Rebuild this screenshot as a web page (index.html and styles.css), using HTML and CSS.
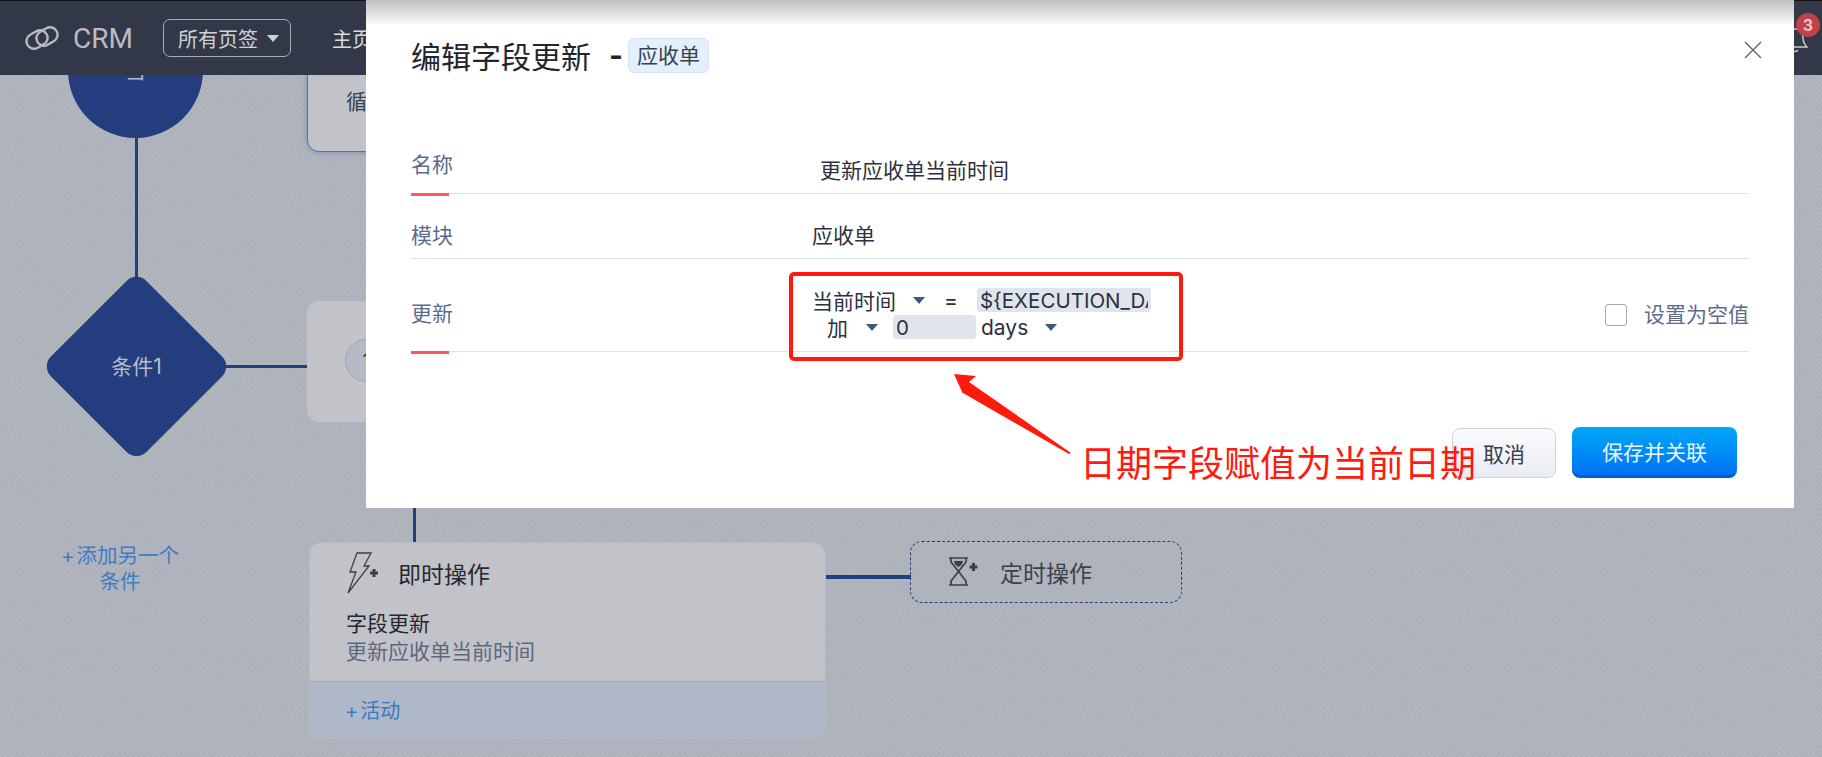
FILE: index.html
```html
<!DOCTYPE html>
<html lang="zh-CN">
  <head>
    <meta charset="UTF-8" />
    <title>CRM</title>
    <link rel="stylesheet" href="styles.css">
  </head>
  <body>
    <header class="topbar">
      <svg class="logo" viewBox="0 0 36 24" width="36" height="24" fill="none" stroke="#b6b9bf" stroke-width="2.4">
        <rect x="2" y="6" width="22" height="15" rx="7.500" transform="rotate(-30 13 13.500)" />
        <rect x="12" y="3" width="22" height="15" rx="7.500" transform="rotate(-30 23 10.500)" />
      </svg>
      <span class="brand">CRM</span>
      <button class="tabs-btn">所有页签<i class="caret caret-light"></i></button>
      <nav class="nav"><a>主页</a></nav>
      <svg class="bell" viewBox="0 0 30 30" width="30" height="30" fill="none" stroke="#c9ccd2" stroke-width="1.4">
        <path d="M15 4 C9 4 7 8 7 13 C7 18 5 20 3 22 L27 22 C25 20 23 18 23 13 C23 8 21 4 15 4 Z" />
        <path d="M12 25 C13 27 17 27 18 25" />
      </svg>
      <span class="badge">3</span>
    </header>

    <!-- workflow diagram behind the dialog -->
    <main class="canvas">
      <div class="line line-v line-start"></div>
      <div class="line line-h line-cond"></div>
      <div class="line line-v line-card"></div>
      <div class="line line-h line-timed"></div>

      <div class="node-start"><span>当</span></div>
      <div class="node-cond"><span>条件1</span></div>
      <a class="add-cond"><b>+</b>添加另一个<br />条件</a>

      <div class="card card-top"><span>循环</span></div>
      <div class="card card-branch"><span class="step-no">1</span></div>

      <div class="card card-action">
        <div class="action-head">
          <svg viewBox="0 0 32 44" width="32" height="44" fill="none" stroke="#3c3f48" stroke-width="1.3">
            <path d="M10 2 L24 2 L17 15 L22 15 L1 42 L9 21 L3 21 Z" />
            <path d="M23 22 H31 M27 18 V26" stroke-width="3" />
          </svg>
          <span>即时操作</span>
        </div>
        <div class="action-body">
          <div class="action-type">字段更新</div>
          <div class="action-name">更新应收单当前时间</div>
        </div>
        <div class="action-foot"><b>+</b>活动</div>
      </div>

      <div class="card-timed">
        <svg viewBox="0 0 30 30" width="30" height="30" fill="none" stroke="#3c3f48" stroke-width="1.7">
          <path d="M1 1 H20 M1 28 H20 M3 1 V5 L10.500 14.500 L3 24 V28 M18 1 V5 L10.500 14.500 L18 24 V28" />
          <path d="M6 4 H15 C14.500 8 12 9 10.500 10 C9 9 6.500 8 6 4 Z" fill="#3c3f48" stroke="none" />
          <path d="M21.500 10 H29.500 M25.500 6 V14" stroke-width="3" />
        </svg>
        <span>定时操作</span>
      </div>
    </main>

    <section class="modal">
      <button class="close" aria-label="关闭">
        <svg viewBox="0 0 18 18" width="18" height="18" stroke="#5c5f66" stroke-width="1.3"><path d="M1 1 L17 17 M17 1 L1 17" /></svg>
      </button>
      <div class="modal-title">
        <h2>编辑字段更新</h2>
        <span class="dash">-</span>
        <span class="chip">应收单</span>
      </div>

      <div class="row row-name">
        <label class="row-label marked">名称</label>
        <div class="row-value value-name">更新应收单当前时间</div>
      </div>
      <div class="row row-module">
        <label class="row-label">模块</label>
        <div class="row-value">应收单</div>
      </div>
      <div class="row row-update">
        <label class="row-label marked">更新</label>
        <div class="row-value update-fields">
          <div class="field-line">
            <span class="pick pick-field">当前时间<i class="caret"></i></span>
            <span class="equals">=</span>
            <input class="text-input input-date" type="text" value="${EXECUTION_DATE}" />
          </div>
          <div class="field-line line-second">
            <span class="pick pick-op">加<i class="caret"></i></span>
            <input class="text-input input-num" type="text" value="0" />
            <span class="pick pick-unit">days<i class="caret"></i></span>
          </div>
        </div>
        <label class="set-empty"><input type="checkbox" />设置为空值</label>
      </div>

      <div class="modal-foot">
        <button class="btn btn-cancel">取消</button>
        <button class="btn btn-save">保存并关联</button>
      </div>
    </section>

    <!-- red annotation drawn on top of the screenshot -->
    <div class="mark-box"></div>
    <svg class="mark-arrow" viewBox="0 0 130 90" width="130" height="90">
      <polygon points="2,2 24,4 17,10 119,81 117,82 11,21 11,22" fill="#ff1a0e" />
    </svg>
    <div class="mark-text">日期字段赋值为当前日期</div>
  </body>
</html>
```

FILE: styles.css
```css
* {
  box-sizing: border-box;
}

body {
  margin: 0;
  height: 757px;
  overflow: hidden;
  position: relative;
  font-family: Inter, "Noto Sans CJK SC", sans-serif;
  color: #2c3140;
  background-color: #b0b4bd;
  background-image:
    repeating-linear-gradient(45deg, rgba(255, 255, 255, 0.012) 0 2px, rgba(0, 0, 0, 0.012) 2px 4px),
    repeating-linear-gradient(-45deg, rgba(255, 255, 255, 0.012) 0 2px, rgba(0, 0, 0, 0.012) 2px 4px);
}

b {
  font-weight: 400;
  margin-right: 2px;
}

/* top bar */
.topbar {
  position: relative;
  height: 75px;
  display: flex;
  align-items: center;
  padding-left: 24px;
  background-color: #333848;
  border-top: 1px solid #111;
  color: #d8dade;
}

.logo {
  margin-right: 13px;
}

.brand {
  font-family: Roboto, sans-serif;
  font-size: 28px;
  color: #b9bcc3;
  margin-right: 30px;
}

.tabs-btn {
  display: flex;
  align-items: center;
  height: 38px;
  width: 128px;
  padding: 0 0 0 14px;
  background: transparent;
  border: 1px solid #a9abb2;
  border-radius: 7px;
  color: #d0d2d8;
  font-family: inherit;
  font-size: 20px;
  margin-right: 41px;
}

.nav {
  font-size: 20px;
}

.caret {
  display: inline-block;
  width: 0;
  height: 0;
  border-left: 6px solid transparent;
  border-right: 6px solid transparent;
  border-top: 7px solid #3f5a75;
}

.caret-light {
  margin-left: 9px;
  border-top-color: #d0d2d8;
}

.bell {
  position: absolute;
  left: 1780px;
  top: 24px;
}

.badge {
  position: absolute;
  left: 1796px;
  top: 12px;
  width: 24px;
  height: 24px;
  border-radius: 50%;
  background-color: #c0414a;
  color: #e3c9cc;
  font-size: 16px;
  font-weight: 700;
  line-height: 24px;
  text-align: center;
}

/* diagram */
.canvas {
  position: absolute;
  inset: 0;
  z-index: -1;
}

.line {
  position: absolute;
  background-color: #233d7f;
}

.line-v {
  width: 3px;
}

.line-h {
  height: 3px;
}

.line-start {
  left: 135px;
  top: 130px;
  height: 150px;
}

.line-cond {
  left: 220px;
  top: 365px;
  width: 90px;
}

.line-card {
  left: 413px;
  top: 500px;
  height: 45px;
}

.line-timed {
  left: 826px;
  top: 575px;
  width: 85px;
  height: 4px;
}

.node-start {
  position: absolute;
  left: 68px;
  top: 3px;
  width: 135px;
  height: 135px;
  border-radius: 50%;
  background-color: #233d7f;
  color: #b9bdc6;
  font-size: 20px;
  display: flex;
  align-items: center;
  justify-content: center;
}

.node-cond {
  position: absolute;
  left: 47px;
  top: 275px;
  width: 179px;
  height: 179px;
  display: flex;
  align-items: center;
  justify-content: center;
  color: #b9bdc6;
  font-size: 21px;
}

.node-cond::before {
  content: "";
  position: absolute;
  inset: 22px;
  top: 24px;
  bottom: 20px;
  border-radius: 14px;
  background-color: #233d7f;
  transform: rotate(45deg);
}

.node-cond span {
  position: relative;
}

.add-cond {
  position: absolute;
  left: 40px;
  top: 543px;
  width: 160px;
  text-align: center;
  font-size: 20.500px;
  line-height: 26px;
  color: #3d7cc9;
}

.card {
  position: absolute;
  left: 307px;
  width: 519px;
  background-color: #c1c3c9;
  border-radius: 12px;
}

.card-top {
  top: 40px;
  height: 112px;
  padding: 44px 0 0 38px;
  border: 1px solid #3a78c8;
  box-shadow: 0 0 5px rgba(58, 120, 200, 0.6);
  font-size: 21px;
  color: #3a4050;
}

.card-branch {
  top: 301px;
  height: 121px;
  padding: 38px 0 0 38px;
}

.step-no {
  display: flex;
  align-items: center;
  justify-content: center;
  width: 43px;
  height: 43px;
  border-radius: 50%;
  background-color: #b6bac6;
  border: 1px solid #9ea4b2;
  font-size: 20px;
}

.card-action {
  left: 309px;
  width: 517px;
  top: 542px;
  height: 197px;
  display: flex;
  flex-direction: column;
  overflow: hidden;
  border: 1px solid #b4b9c5;
}

.action-head {
  display: flex;
  align-items: center;
  gap: 19px;
  height: 60px;
  padding: 0 0 0 37px;
  font-size: 23px;
  color: #262932;
}

.action-body {
  flex: 1;
  padding: 7px 0 0 36px;
  font-size: 21px;
  line-height: 28px;
}

.action-type {
  color: #24272f;
}

.action-name {
  color: #5d6880;
}

.action-foot {
  height: 57px;
  padding-left: 35px;
  background-color: #aeb8c8;
  border-top: 1px solid #a3aec0;
  font-size: 20px;
  line-height: 58px;
  color: #3a78c4;
}

.card-timed {
  position: absolute;
  left: 910px;
  top: 541px;
  width: 272px;
  height: 62px;
  display: flex;
  align-items: center;
  gap: 22px;
  padding-left: 37px;
  border: 1px dashed #233d7f;
  border-radius: 12px;
  font-size: 23px;
  color: #3a4050;
}

/* dialog */
.modal {
  position: absolute;
  left: 366px;
  top: 0;
  width: 1428px;
  height: 508px;
  padding: 35px 45px 0;
  background: linear-gradient(#c2c2c2 1px, #fafafa 24px, #fff 24px);
}

.close {
  position: absolute;
  right: 32px;
  top: 41px;
  padding: 0;
  border: none;
  background: none;
}

.modal-title {
  display: flex;
  align-items: center;
  height: 40px;
  margin-bottom: 75px;
}

.modal-title h2 {
  margin: 0;
  font-size: 30px;
  font-weight: 400;
  color: #22252c;
}

.dash {
  margin: 0 5px 0 18px;
  font-size: 30px;
  font-weight: 700;
  color: #22252c;
}

.chip {
  padding: 0 8px;
  height: 35px;
  line-height: 33px;
  font-size: 21px;
  color: #3a4050;
  background-color: #e3effc;
  border: 1px solid #d5e4f7;
  border-radius: 6px;
}

.row {
  position: relative;
  display: flex;
  border-bottom: 1px solid #dde3ec;
  font-size: 21px;
}

.row-label {
  position: relative;
  width: 401px;
  font-size: 21px;
  color: #5d6b8a;
}

.marked::after {
  content: "";
  position: absolute;
  left: 0;
  width: 38px;
  height: 3px;
  background-color: #fb5a5c;
}

.row-name {
  height: 44px;
}

.row-name .row-label {
  line-height: 30px;
}

.row-name .marked::after {
  top: 43px;
}

.value-name {
  padding: 7px 0 0 8px;
  line-height: 28px;
}

.row-module {
  height: 65px;
  align-items: center;
  padding-top: 16px;
}

.row-update {
  height: 93px;
}

.row-update .row-label {
  padding-top: 41px;
  line-height: 28px;
}

.row-update .marked::after {
  top: 92px;
}

.update-fields {
  padding-top: 28px;
}

.field-line {
  display: flex;
  align-items: center;
  height: 26px;
}

.line-second {
  padding: 2px 0 0 15px;
}

.pick {
  display: flex;
  align-items: center;
  white-space: nowrap;
}

.pick .caret {
  margin-left: 17px;
}

.pick-op .caret {
  margin-left: 18px;
}

.equals {
  margin: 0 19px;
}

.text-input {
  height: 24px;
  padding: 0 3px;
  border: none;
  border-radius: 3px;
  background-color: #e0e5ec;
  font-family: inherit;
  font-size: 20.500px;
  color: #2c3140;
}

.input-date {
  width: 174px;
}

.input-num {
  width: 83px;
  margin: 0 5px 0 15px;
}

.set-empty {
  position: absolute;
  right: 0;
  top: 39px;
  display: flex;
  align-items: center;
  gap: 17px;
  font-size: 21px;
  color: #5d6b8a;
}

.set-empty input {
  appearance: none;
  position: relative;
  top: 2px;
  width: 22px;
  height: 22px;
  margin: 0;
  background: #fff;
  border: 1px solid #a9a9a9;
  border-radius: 3px;
}

.modal-foot {
  display: flex;
  justify-content: flex-end;
  align-items: flex-start;
  gap: 16px;
  padding: 75px 12px 0 0;
}

.btn {
  height: 51px;
  font-family: inherit;
  font-size: 21px;
  border-radius: 8px;
}

.btn-cancel {
  width: 104px;
  margin-top: 1px;
  height: 50px;
  color: #3a3d46;
  background: linear-gradient(#fbfcfe, #e9ecf3);
  border: 1px solid #d0d4de;
}

.btn-save {
  width: 165px;
  color: #eaf6ff;
  background: linear-gradient(#00a8f8, #0072f5);
  border: none;
  border-bottom: 3px solid #0060c8;
}

/* annotation */
.mark-box {
  position: absolute;
  left: 789px;
  top: 272px;
  width: 394px;
  height: 89px;
  border: 4px solid #ff1a0e;
  border-radius: 5px;
}

.mark-arrow {
  position: absolute;
  left: 952px;
  top: 372px;
}

.mark-text {
  position: absolute;
  left: 1080px;
  top: 438px;
  font-size: 36px;
  line-height: 52px;
  color: #ff1a0e;
  white-space: nowrap;
}
```
